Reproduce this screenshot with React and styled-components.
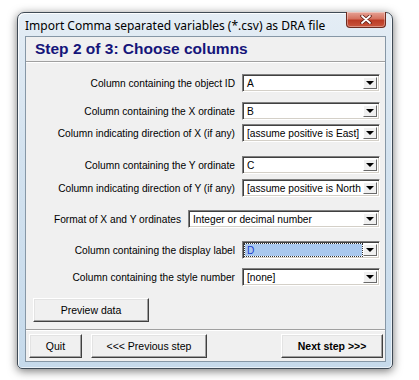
import React from "react";
import styled, { createGlobalStyle } from "styled-components";

const GlobalStyle = createGlobalStyle`
  html, body {
    margin: 0;
    padding: 0;
    background: #ffffff;
  }
  body {
    font-family: "Liberation Sans", Arial, sans-serif;
  }
`;

const rows = [
  { label: "Column containing the object ID", value: "A", top: 12 },
  { label: "Column containing the X ordinate", value: "B", top: 10 },
  { label: "Column indicating direction of X (if any)", value: "[assume positive is East]", top: 4 },
  { label: "Column containing the Y ordinate", value: "C", top: 14 },
  { label: "Column indicating direction of Y (if any)", value: "[assume positive is North", top: 5 },
  { label: "Format of X and Y ordinates", value: "Integer or decimal number", top: 13, wide: true },
  { label: "Column containing the display label", value: "D", top: 13, selected: true },
  { label: "Column containing the style number", value: "[none]", top: 9 },
];

const App = () => {
  return (
    <>
      <GlobalStyle />
      <Page>
        <Window>
          <TitleBar>
            <Title>Import Comma separated variables (*.csv) as DRA file</Title>
            <CloseButton>
              <svg width="12" height="9" viewBox="0 0 12 9">
                <path
                  d="M2 1 L10 8 M10 1 L2 8"
                  stroke="#5a1a12"
                  strokeWidth="3.4"
                  strokeLinecap="round"
                />
                <path
                  d="M2 1 L10 8 M10 1 L2 8"
                  stroke="#ffffff"
                  strokeWidth="1.8"
                  strokeLinecap="round"
                />
              </svg>
            </CloseButton>
          </TitleBar>
          <Client>
            <Header>Step 2 of 3: Choose columns</Header>
            <Form>
              {rows.map((row) => (
                <Row key={row.label} $top={row.top}>
                  <Label>{row.label}</Label>
                  <Combo $width={row.wide ? 192 : 138}>
                    <ComboValue $selected={row.selected}>{row.value}</ComboValue>
                    <DropButton>
                      <Arrow />
                    </DropButton>
                  </Combo>
                </Row>
              ))}
              <PreviewButton>Preview data</PreviewButton>
            </Form>
            <Footer>
              <Button $width={53}>Quit</Button>
              <Button $width={116}>&lt;&lt;&lt; Previous step</Button>
              <Spacer />
              <Button $width={102} $bold>
                Next step &gt;&gt;&gt;
              </Button>
            </Footer>
          </Client>
        </Window>
      </Page>
    </>
  );
};

const Page = styled.div`
  width: 419px;
  height: 380px;
  padding: 12px 0 0 17px;
  box-sizing: border-box;
`;

const Window = styled.div`
  width: 376px;
  height: 357px;
  box-sizing: border-box;
  display: flex;
  flex-direction: column;
  padding: 0 6px 6px 7px;
  border: 1px solid #3f4a55;
  border-radius: 7px 7px 5px 5px;
  background: linear-gradient(180deg, #e4edf5 0%, #d3e2ef 40%, #c6daeb 100%);
  box-shadow: 0 2px 10px rgba(0, 0, 0, 0.55), inset 1px 1px 0 rgba(255, 255, 255, 0.85),
    inset -1px -1px 0 rgba(255, 255, 255, 0.6);
`;

const TitleBar = styled.div`
  height: 23px;
  display: flex;
  align-items: flex-start;
  justify-content: space-between;
`;

const Title = styled.div`
  font-family: "Noto Sans", "DejaVu Sans", sans-serif;
  font-size: 12px;
  color: #000;
  padding: 4px 0 0 0;
`;

const CloseButton = styled.div`
  width: 40px;
  height: 16px;
  margin-top: -1px;
  box-sizing: border-box;
  display: flex;
  align-items: center;
  justify-content: center;
  border: 1px solid #6e2b1f;
  border-top: none;
  border-radius: 0 0 4px 4px;
  background: linear-gradient(180deg, #e6a396 0%, #d5725f 45%, #bb3b25 55%, #c9553c 100%);
  box-shadow: inset 0 0 0 1px rgba(255, 255, 255, 0.35);
`;

const Client = styled.div`
  flex: 1;
  display: flex;
  flex-direction: column;
  background: #f0f0f0;
  border: 1px solid #8697a6;
`;

const Header = styled.div`
  height: 25px;
  box-sizing: border-box;
  padding: 3px 0 0 9px;
  border-bottom: 1px solid #a0a0a0;
  box-shadow: 0 1px 0 #ffffff;
  font-weight: bold;
  font-size: 15.5px;
  color: #15157a;
`;

const Form = styled.div`
  flex: 1;
  display: flex;
  flex-direction: column;
  padding: 0 5px 0 7px;
`;

const Row = styled.div`
  display: flex;
  align-items: center;
  justify-content: flex-end;
  gap: 7px;
  margin-top: ${(p) => p.$top}px;
`;

const Label = styled.div`
  font-size: 10.2px;
  color: #000;
  white-space: nowrap;
`;

const Combo = styled.div`
  width: ${(p) => p.$width}px;
  height: 18px;
  box-sizing: border-box;
  display: flex;
  align-items: center;
  background: #ffffff;
  border-top: 1px solid #808080;
  border-left: 1px solid #808080;
  border-bottom: 1px solid #ffffff;
  border-right: 1px solid #ffffff;
  box-shadow: inset 1px 1px 0 #404040, inset -1px -1px 0 #d4d0c8;
  padding: 2px;
`;

const ComboValue = styled.div`
  flex: 1;
  height: 12px;
  display: flex;
  align-items: center;
  padding-left: 2px;
  font-size: 10.2px;
  white-space: nowrap;
  overflow: hidden;
  color: ${(p) => (p.$selected ? "#1c3fd0" : "#000")};
  background: ${(p) => (p.$selected ? "#a9c8ee" : "transparent")};
  outline: ${(p) => (p.$selected ? "1px dotted #303030" : "none")};
`;

const DropButton = styled.div`
  width: 14px;
  height: 12px;
  margin-left: 1px;
  box-sizing: border-box;
  display: flex;
  align-items: center;
  justify-content: center;
  background: #f0f0f0;
  border-top: 1px solid #ffffff;
  border-left: 1px solid #ffffff;
  border-right: 1px solid #696969;
  border-bottom: 1px solid #696969;
`;

const Arrow = styled.div`
  width: 0;
  height: 0;
  border-left: 4px solid transparent;
  border-right: 4px solid transparent;
  border-top: 4px solid #000;
`;

const Button = styled.div`
  width: ${(p) => p.$width}px;
  height: 24px;
  box-sizing: border-box;
  display: flex;
  align-items: center;
  justify-content: center;
  font-size: 10.5px;
  font-weight: ${(p) => (p.$bold ? "bold" : "normal")};
  color: #000;
  background: #f0f0f0;
  border-top: 1px solid #ffffff;
  border-left: 1px solid #ffffff;
  border-right: 1px solid #404040;
  border-bottom: 1px solid #404040;
  box-shadow: inset -1px -1px 0 #a0a0a0, inset 1px 1px 0 #e3e3e3;
`;

const PreviewButton = styled(Button)`
  width: 116px;
  margin-top: 12px;
`;

const Footer = styled.div`
  display: flex;
  align-items: center;
  gap: 9px;
  padding: 4px 2px 3px 3px;
  border-top: 1px solid #a0a0a0;
  box-shadow: inset 0 1px 0 #ffffff;
`;

const Spacer = styled.div`
  flex: 1;
`;

export default App;
